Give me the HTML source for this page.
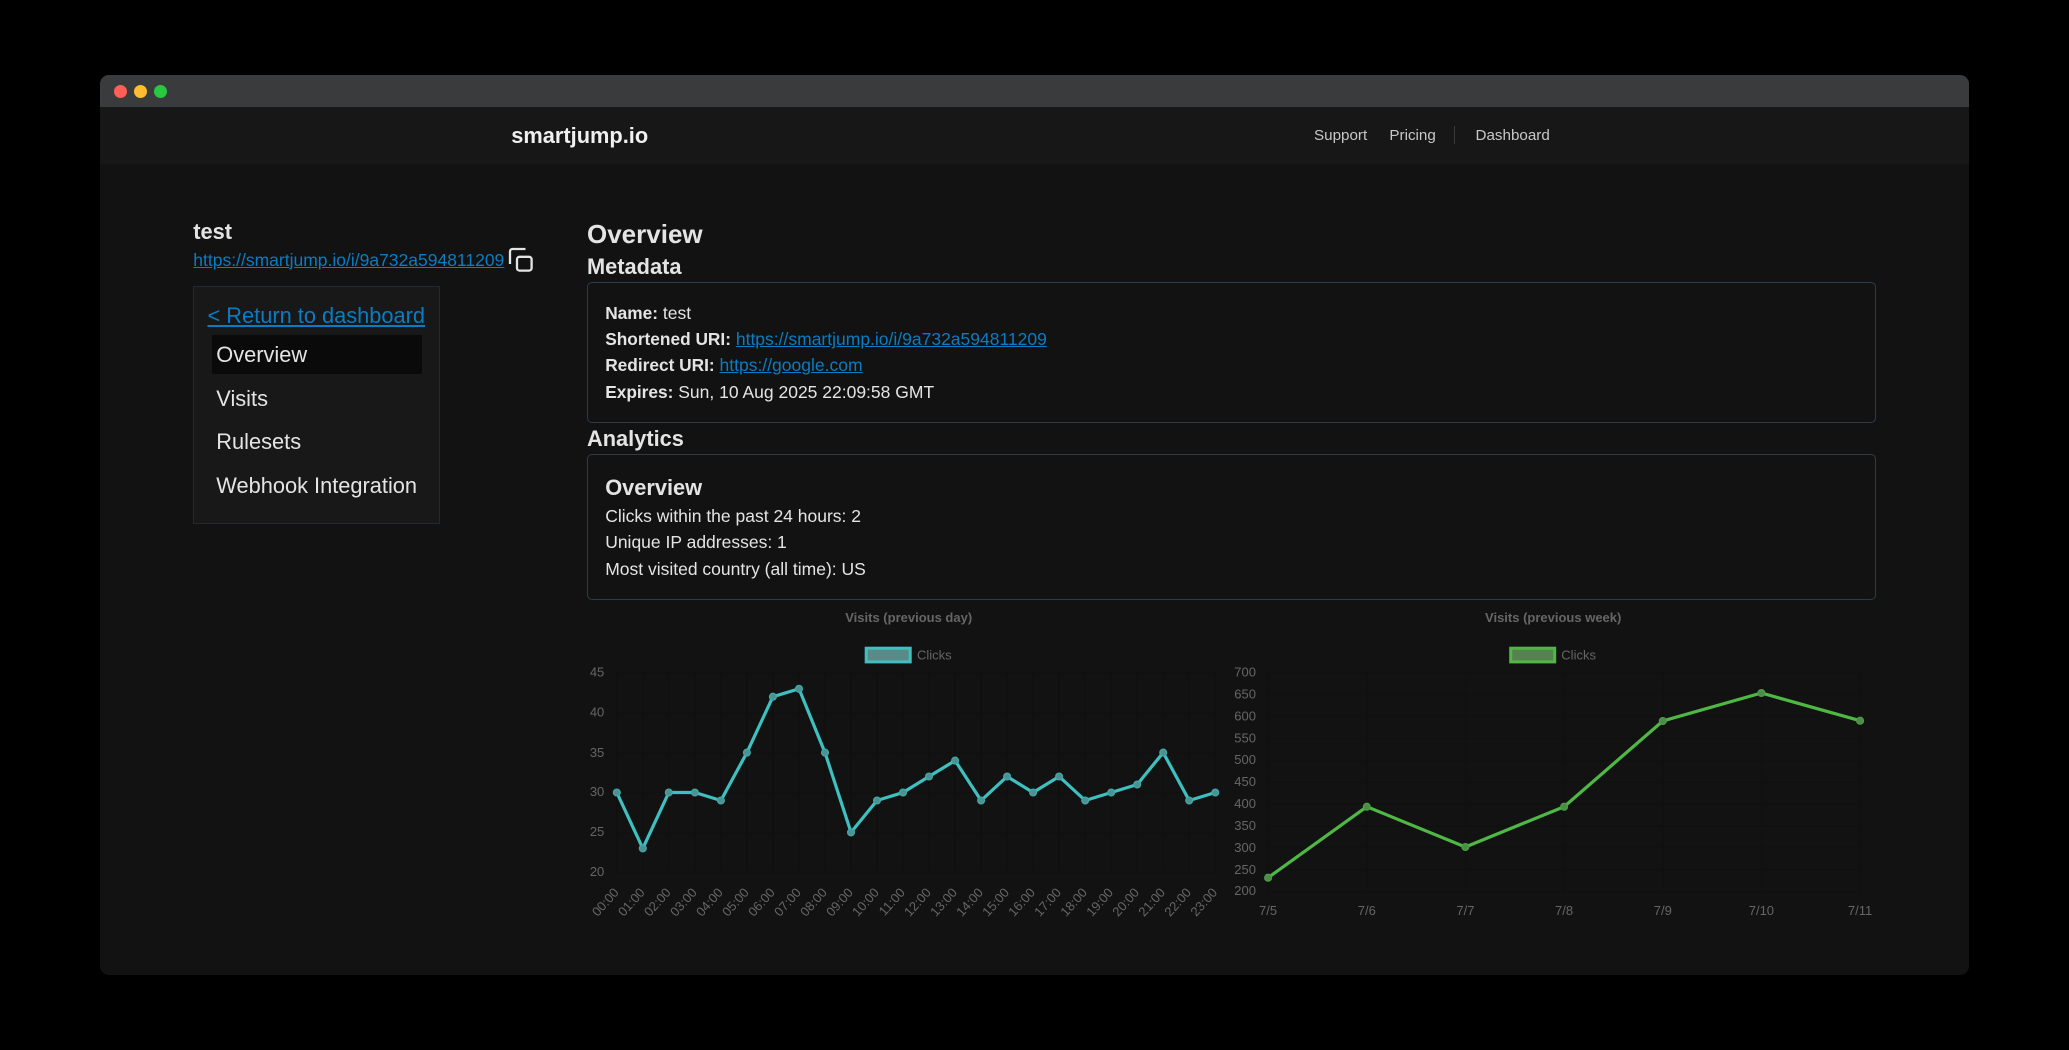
<!DOCTYPE html>
<html lang="en">
<head>
<meta charset="utf-8">
<title>smartjump.io</title>
<style>
html,body{margin:0;padding:0;background:#000;width:2069px;height:1050px;overflow:hidden}
body{font-family:"Liberation Sans",sans-serif;color:#e4e4e4;position:relative}
.win{position:absolute;left:100px;top:75px;width:1869px;height:900px;background:#121212;border-radius:9px;overflow:hidden}
.bar{position:absolute;left:100px;top:75px;width:1869px;height:32px;background:#3a3b3d;border-radius:9px 9px 0 0}
.nav{position:absolute;left:100px;top:107px;width:1869px;height:57px;background:#171717}
.dot{position:absolute;width:13px;height:13px;border-radius:50%;top:85px}
.t{position:absolute;white-space:nowrap;line-height:20px;margin:0;font-weight:400}
.b{font-weight:700}
.s17{font-size:17.5px}
.s17 b{font-size:17.3px}
.s21{font-size:21.8px}
.s15{font-size:15.2px;color:#c8c8c8}
a{color:#0a7cc4;text-decoration:underline}
.side{position:absolute;left:193px;top:286px;width:245px;height:236px;background:#181818;border:1px solid #1f2937}
.act{position:absolute;left:212px;top:335px;width:210px;height:39px;background:#0a0a0a}
.box{position:absolute;left:587px;width:1287px;border:1.3px solid #2d3b4e;border-radius:5px;box-sizing:content-box}
svg{position:absolute;left:0;top:0}
svg text{font-family:"Liberation Sans",sans-serif;font-size:13px;fill:#666}
</style>
</head>
<body>
<div class="win"></div>
<div class="bar"></div>
<div class="dot" style="left:113.5px;background:#ff5f57"></div>
<div class="dot" style="left:133.5px;background:#febc2e"></div>
<div class="dot" style="left:153.5px;background:#28c840"></div>
<div class="nav"></div>

<div class="t b" style="left:511.3px;top:125.7px;font-size:21.8px;color:#f0f0f0">smartjump.io</div>
<div class="t s15" style="left:1314px;top:125.7px">Support</div>
<div class="t s15" style="left:1389.4px;top:125.7px">Pricing</div>
<div style="position:absolute;left:1454px;top:126px;width:1px;height:18px;background:#3a3a3a"></div>
<div class="t s15" style="left:1475.5px;top:125.7px">Dashboard</div>

<div class="t b s21" style="left:193.3px;top:221.5px">test</div>
<a class="t s17" href="#" style="left:193.3px;top:249.7px">https://smartjump.io/i/9a732a594811209</a>
<svg width="2069" height="1050" style="z-index:2;pointer-events:none">
<path d="M510 264V251.500A2.500 2.500 0 0 1 512.500 249H525.500" fill="none" stroke="#e4e4e4" stroke-width="2.300"/>
<rect x="517" y="256.800" width="14.600" height="13.800" rx="2.500" fill="none" stroke="#e4e4e4" stroke-width="2.300"/>
</svg>

<div class="side"></div>
<div class="act"></div>
<a class="t s21" href="#" style="left:207.5px;top:305.8px">&lt; Return to dashboard</a>
<div class="t s21" style="left:216.3px;top:344.8px">Overview</div>
<div class="t s21" style="left:216.3px;top:388.5px">Visits</div>
<div class="t s21" style="left:216.3px;top:431.8px">Rulesets</div>
<div class="t s21" style="left:216.3px;top:475.8px">Webhook Integration</div>

<h1 class="t b" style="left:587px;top:223.7px;font-size:26px">Overview</h1>
<h2 class="t b s21" style="left:587px;top:256.5px">Metadata</h2>
<div class="box" style="top:282px;height:139px"></div>
<div class="t s17" style="left:605.2px;top:303.3px"><b>Name:</b> test</div>
<div class="t s17" style="left:605.2px;top:329.3px"><b>Shortened URI:</b> <a href="#">https://smartjump.io/i/9a732a594811209</a></div>
<div class="t s17" style="left:605.2px;top:355.3px"><b>Redirect URI:</b> <a href="#">https://google.com</a></div>
<div class="t s17" style="left:605.2px;top:382.3px"><b>Expires:</b> Sun, 10 Aug 2025 22:09:58 GMT</div>

<h2 class="t b s21" style="left:587px;top:428.5px">Analytics</h2>
<div class="box" style="top:454px;height:144px"></div>
<h3 class="t b s21" style="left:605.2px;top:477.8px">Overview</h3>
<div class="t s17" style="left:605.2px;top:506px">Clicks within the past 24 hours: 2</div>
<div class="t s17" style="left:605.2px;top:532px">Unique IP addresses: 1</div>
<div class="t s17" style="left:605.2px;top:559px">Most visited country (all time): US</div>

<svg width="2069" height="1050">
<!-- chart 1 grid -->
<path d="M616.8 672.7H1215.3M616.8 712.6H1215.3M616.800 752.600H1215.300M616.800 792.500H1215.300M616.800 832.400H1215.300M616.800 872.300H1215.300M616.800 672.700V872.300M642.800 672.700V872.300M668.800 672.700V872.300M694.900 672.700V872.300M720.900 672.700V872.300M746.900 672.700V872.300M772.900 672.700V872.300M799 672.700V872.300M825 672.700V872.300M851 672.700V872.300M877 672.700V872.300M903 672.700V872.300M929 672.700V872.300M955.100 672.700V872.300M981.100 672.700V872.300M1007.100 672.700V872.300M1033.100 672.700V872.300M1059.100 672.700V872.300M1085.200 672.700V872.300M1111.200 672.700V872.300M1137.200 672.700V872.300M1163.200 672.700V872.300M1189.200 672.700V872.300M1215.300 672.700V872.300" stroke="#000" stroke-opacity=".1" stroke-width="1.300" fill="none"/>
<text x="908.700" y="622" text-anchor="middle" style="font-weight:700">Visits (previous day)</text>
<rect x="866.200" y="648.200" width="44" height="13.700" fill="#5a8a88" stroke="#3fc0c0" stroke-width="3"/>
<text x="917" y="659.300">Clicks</text>
<g text-anchor="end">
<text x="604.300" y="676.300">45</text>
<text x="604.300" y="716.500">40</text>
<text x="604.300" y="756.800">35</text>
<text x="604.300" y="795.800">30</text>
<text x="604.300" y="836.200">25</text>
<text x="604.300" y="876.200">20</text>
</g>
<g text-anchor="end">
<text transform="rotate(-48 619.500 893)" x="619.500" y="893">00:00</text>
<text transform="rotate(-48 645.500 893)" x="645.500" y="893">01:00</text>
<text transform="rotate(-48 671.500 893)" x="671.500" y="893">02:00</text>
<text transform="rotate(-48 697.600 893)" x="697.600" y="893">03:00</text>
<text transform="rotate(-48 723.600 893)" x="723.600" y="893">04:00</text>
<text transform="rotate(-48 749.600 893)" x="749.600" y="893">05:00</text>
<text transform="rotate(-48 775.600 893)" x="775.600" y="893">06:00</text>
<text transform="rotate(-48 801.700 893)" x="801.700" y="893">07:00</text>
<text transform="rotate(-48 827.700 893)" x="827.700" y="893">08:00</text>
<text transform="rotate(-48 853.700 893)" x="853.700" y="893">09:00</text>
<text transform="rotate(-48 879.700 893)" x="879.700" y="893">10:00</text>
<text transform="rotate(-48 905.700 893)" x="905.700" y="893">11:00</text>
<text transform="rotate(-48 931.700 893)" x="931.700" y="893">12:00</text>
<text transform="rotate(-48 957.800 893)" x="957.800" y="893">13:00</text>
<text transform="rotate(-48 983.800 893)" x="983.800" y="893">14:00</text>
<text transform="rotate(-48 1009.800 893)" x="1009.800" y="893">15:00</text>
<text transform="rotate(-48 1035.800 893)" x="1035.800" y="893">16:00</text>
<text transform="rotate(-48 1061.800 893)" x="1061.800" y="893">17:00</text>
<text transform="rotate(-48 1087.900 893)" x="1087.900" y="893">18:00</text>
<text transform="rotate(-48 1113.900 893)" x="1113.900" y="893">19:00</text>
<text transform="rotate(-48 1139.900 893)" x="1139.900" y="893">20:00</text>
<text transform="rotate(-48 1165.900 893)" x="1165.900" y="893">21:00</text>
<text transform="rotate(-48 1191.900 893)" x="1191.900" y="893">22:00</text>
<text transform="rotate(-48 1218 893)" x="1218" y="893">23:00</text>
</g>
<polyline fill="none" stroke="#3fc0c0" stroke-width="3.200" points="616.800,792.500 642.800,848.400 668.800,792.500 694.900,792.500 720.900,800.500 746.900,752.600 772.900,696.700 799,688.800 825,752.600 851,832.400 877,800.500 903,792.500 929,776.500 955.100,760.600 981.100,800.500 1007.100,776.500 1033.100,792.500 1059.100,776.500 1085.200,800.500 1111.200,792.500 1137.200,784.500 1163.200,752.600 1189.200,800.500 1215.300,792.500"/>
<g fill="#4f9090" stroke="#3fa8a8" stroke-width="1.300">
<circle cx="616.800" cy="792.500" r="3.400"/><circle cx="642.800" cy="848.400" r="3.400"/><circle cx="668.800" cy="792.500" r="3.400"/><circle cx="694.900" cy="792.500" r="3.400"/><circle cx="720.900" cy="800.500" r="3.400"/><circle cx="746.900" cy="752.600" r="3.400"/><circle cx="772.900" cy="696.700" r="3.400"/><circle cx="799" cy="688.800" r="3.400"/><circle cx="825" cy="752.600" r="3.400"/><circle cx="851" cy="832.400" r="3.400"/><circle cx="877" cy="800.500" r="3.400"/><circle cx="903" cy="792.500" r="3.400"/><circle cx="929" cy="776.500" r="3.400"/><circle cx="955.100" cy="760.600" r="3.400"/><circle cx="981.100" cy="800.500" r="3.400"/><circle cx="1007.100" cy="776.500" r="3.400"/><circle cx="1033.100" cy="792.500" r="3.400"/><circle cx="1059.100" cy="776.500" r="3.400"/><circle cx="1085.200" cy="800.500" r="3.400"/><circle cx="1111.200" cy="792.500" r="3.400"/><circle cx="1137.200" cy="784.500" r="3.400"/><circle cx="1163.200" cy="752.600" r="3.400"/><circle cx="1189.200" cy="800.500" r="3.400"/><circle cx="1215.300" cy="792.500" r="3.400"/>
</g>

<!-- chart 2 grid -->
<path d="M1268.100 672.700H1860.100M1268.100 694.600H1860.100M1268.100 716.500H1860.100M1268.100 738.400H1860.100M1268.100 760.300H1860.100M1268.100 782.200H1860.100M1268.100 804.100H1860.100M1268.100 826H1860.100M1268.100 847.900H1860.100M1268.100 869.800H1860.100M1268.100 891.700H1860.100M1268.100 672.700V891.700M1366.800 672.700V891.700M1465.400 672.700V891.700M1564.100 672.700V891.700M1662.800 672.700V891.700M1761.400 672.700V891.700M1860.100 672.700V891.700" stroke="#000" stroke-opacity=".1" stroke-width="1.300" fill="none"/>
<text x="1553.200" y="622" text-anchor="middle" style="font-weight:700">Visits (previous week)</text>
<rect x="1510.700" y="648.200" width="44" height="13.700" fill="#56824f" stroke="#4fb845" stroke-width="3"/>
<text x="1561.300" y="659.300">Clicks</text>
<g text-anchor="end">
<text x="1256" y="676.300">700</text>
<text x="1256" y="698.300">650</text>
<text x="1256" y="720.300">600</text>
<text x="1256" y="742.300">550</text>
<text x="1256" y="763.900">500</text>
<text x="1256" y="785.900">450</text>
<text x="1256" y="807.900">400</text>
<text x="1256" y="829.900">350</text>
<text x="1256" y="851.900">300</text>
<text x="1256" y="873.900">250</text>
<text x="1256" y="895.200">200</text>
</g>
<g text-anchor="middle">
<text x="1268.100" y="915">7/5</text>
<text x="1366.800" y="915">7/6</text>
<text x="1465.400" y="915">7/7</text>
<text x="1564.100" y="915">7/8</text>
<text x="1662.800" y="915">7/9</text>
<text x="1761.400" y="915">7/10</text>
<text x="1860.100" y="915">7/11</text>
</g>
<polyline fill="none" stroke="#4fb845" stroke-width="3.200" points="1268.100,877.700 1366.800,806.700 1465.400,847 1564.100,806.700 1662.800,721 1761.400,693 1860.100,720.700"/>
<g fill="#4f8a4a" stroke="#4a9f42" stroke-width="1.300">
<circle cx="1268.100" cy="877.700" r="3.400"/><circle cx="1366.800" cy="806.700" r="3.400"/><circle cx="1465.400" cy="847" r="3.400"/><circle cx="1564.100" cy="806.700" r="3.400"/><circle cx="1662.800" cy="721" r="3.400"/><circle cx="1761.400" cy="693" r="3.400"/><circle cx="1860.100" cy="720.700" r="3.400"/>
</g>
</svg>
</body>
</html>
